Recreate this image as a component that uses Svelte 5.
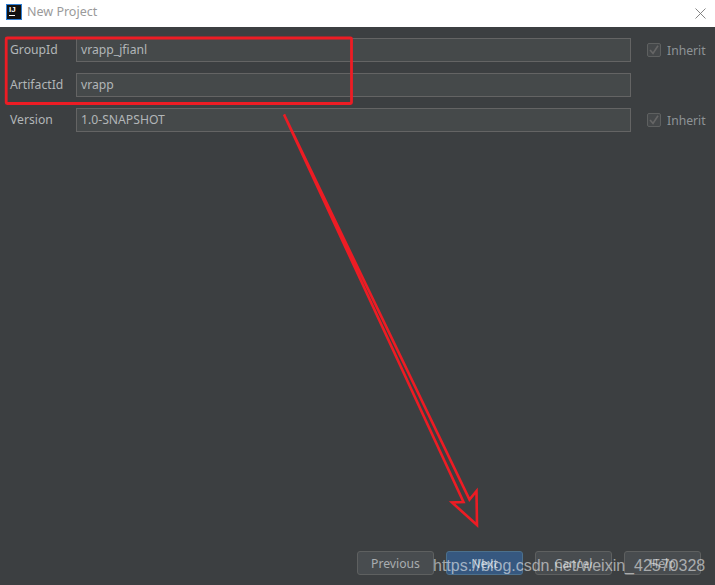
<script lang="ts">
  const fields = [
    { label: 'GroupId', value: 'vrapp_jfianl', inherit: true },
    { label: 'ArtifactId', value: 'vrapp', inherit: false },
    { label: 'Version', value: '1.0-SNAPSHOT', inherit: true }
  ];

  const buttons = ['Previous', 'Next', 'Cancel', 'Help'];
</script>

<div class="dialog">
  <header class="titlebar">
    <span class="logo"><span class="logo-text">IJ</span><span class="logo-bar"></span></span>
    <span class="title">New Project</span>
    <svg class="close" width="11" height="11" viewBox="0 0 11 11" fill="none" stroke="#777" stroke-width="0.9">
      <path d="M0.5 0.5l10 10M10.5 0.5l-10 10" />
    </svg>
  </header>

  <main class="body">
    <div class="form">
      {#each fields as field (field.label)}
        <div class="row">
          <span class="label">{field.label}</span>
          <div class="input">{field.value}</div>
          {#if field.inherit}
            <span class="inherit">
              <span class="check">
                <svg width="10" height="10" viewBox="0 0 10 10" fill="none" stroke="#666" stroke-width="1.6">
                  <path d="M1 5l3 3.4L9 0.8" />
                </svg>
              </span>
              Inherit
            </span>
          {/if}
        </div>
      {/each}
    </div>

    <footer class="actions">
      {#each buttons as button}
        <button class="btn" class:primary={button === 'Next'}>{button}</button>
      {/each}
    </footer>
  </main>

  <svg class="markup" width="715" height="585" viewBox="0 0 715 585" fill="none">
    <rect x="6.2" y="38" width="345.300" height="65.500" rx="1" stroke="#ed1c24" stroke-width="2.8" />
    <path
      d="M284 114.500L463.500 502L452 502.500L477 525L476.500 491L469.500 499.500L284 114.500Z"
      stroke="#ed1c24"
      stroke-width="2.6"
      stroke-linejoin="miter"
    />
  </svg>

  <span class="watermark">https://blog.csdn.net/weixin_42570328</span>
</div>

<style>
  :global(body) {
    margin: 0;
    background: #3c3f41;
  }

  .dialog {
    position: relative;
    width: 715px;
    height: 585px;
    display: flex;
    flex-direction: column;
    overflow: hidden;
    font-family: "Noto Sans", "Open Sans", sans-serif;
    font-size: 12.2px;
  }

  .titlebar {
    height: 27px;
    flex-shrink: 0;
    background: #fff;
    display: flex;
    align-items: center;
    padding: 0 9px 0 6px;
    box-sizing: border-box;
  }

  .logo {
    width: 16px;
    height: 16px;
    margin-bottom: 3px;
    box-sizing: border-box;
    background: #111;
    border: 1px solid #2f7fd6;
    display: flex;
    flex-direction: column;
    padding: 1px 0 0 2px;
    color: #fff;
  }

  .logo-text {
    font-family: "Liberation Sans", sans-serif;
    font-size: 8px;
    font-weight: 700;
    line-height: 8px;
  }

  .logo-bar {
    width: 6px;
    height: 1px;
    margin-top: 1px;
    background: #fff;
  }

  .title {
    margin-left: 5px;
    margin-bottom: 4px;
    color: #9a9a9a;
    font-size: 12.5px;
  }

  .close {
    margin-left: auto;
  }

  .body {
    flex: 1;
    min-height: 0;
    background: #3c3f41;
    display: flex;
    flex-direction: column;
    padding: 11px 14px 10px 10px;
  }

  .form {
    display: flex;
    flex-direction: column;
    gap: 11px;
  }

  .row {
    display: flex;
    align-items: center;
    height: 24px;
    color: #b2b6b8;
  }

  .label {
    width: 66px;
    flex-shrink: 0;
    position: relative;
    top: -1px;
  }

  .input {
    width: 555px;
    height: 24px;
    flex-shrink: 0;
    box-sizing: border-box;
    background: #45494a;
    border: 1px solid #646464;
    padding-left: 4px;
    line-height: 21px;
  }

  .inherit {
    margin-left: 16px;
    display: flex;
    align-items: center;
    gap: 6px;
    color: #8e9396;
  }

  .check {
    width: 14px;
    height: 14px;
    box-sizing: border-box;
    border: 1px solid #5e6060;
    border-radius: 2px;
    background: #45484a;
    display: flex;
    align-items: center;
    justify-content: center;
  }

  .actions {
    margin-top: auto;
    display: flex;
    justify-content: flex-end;
    gap: 12px;
  }

  .btn {
    width: 77px;
    height: 24px;
    padding: 0;
    box-sizing: border-box;
    background: #484c4f;
    border: 1px solid #5e6060;
    border-radius: 3px;
    color: #a8adb0;
    font: inherit;
  }

  .btn.primary {
    background: #365880;
    border-color: #4c708c;
    color: #b9c6d4;
  }

  .markup {
    position: absolute;
    left: 0;
    top: 0;
    pointer-events: none;
  }

  .watermark {
    position: absolute;
    left: 433px;
    top: 556px;
    font-family: "Liberation Sans", Arial, sans-serif;
    font-size: 16px;
    line-height: 20px;
    white-space: nowrap;
    color: rgba(255, 255, 255, 0.55);
  }
</style>
